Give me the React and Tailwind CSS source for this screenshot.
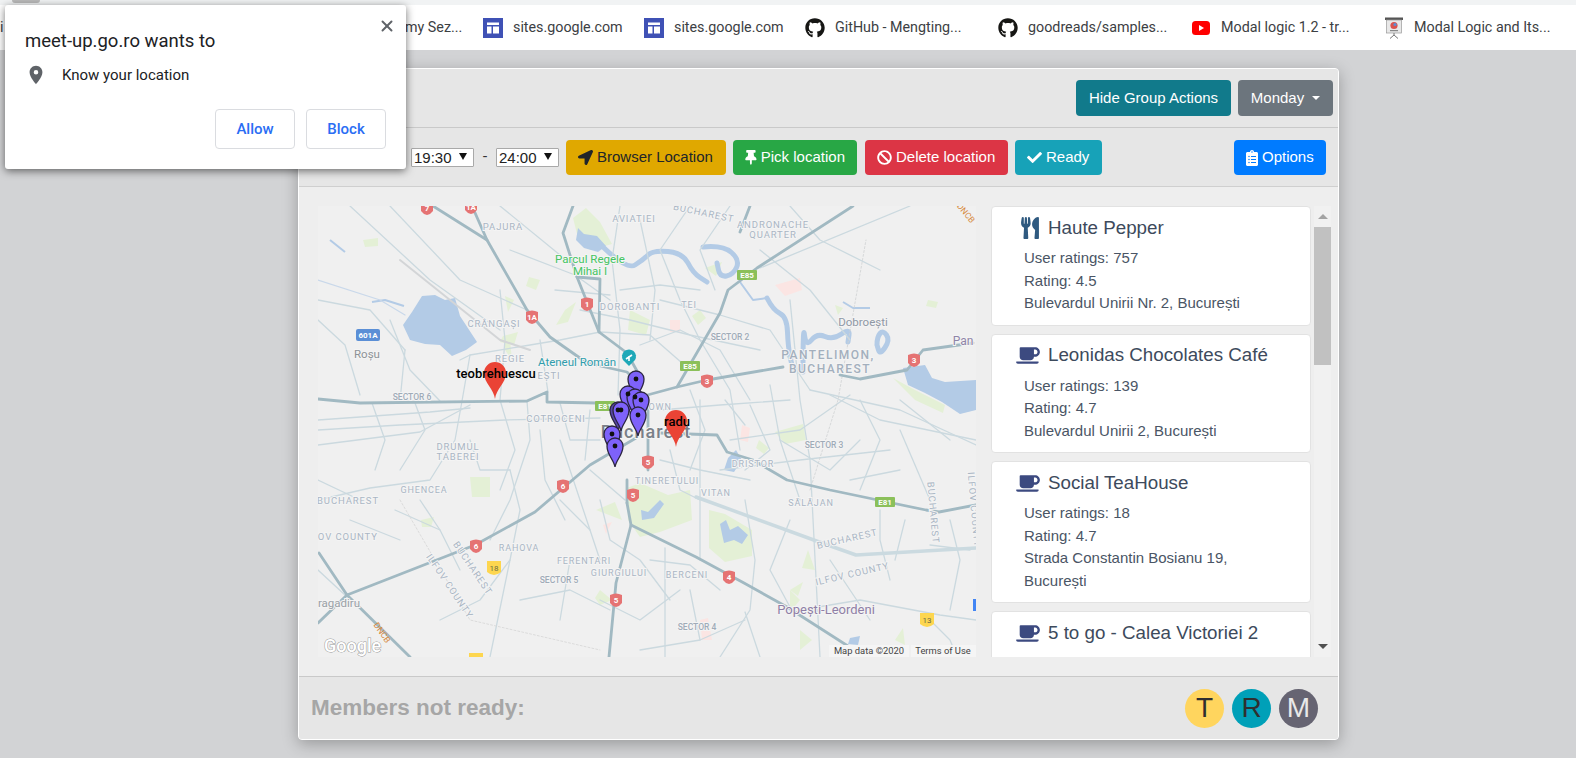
import React from "react";
import {
  FaBan,
  FaCheck,
  FaClipboardList,
  FaCoffee,
  FaGithub,
  FaLocationArrow,
  FaThumbtack,
  FaUtensils,
} from "react-icons/fa";
import { MdLocationOn } from "react-icons/md";
import { X } from "lucide-react";

const mainRoads = [
  "M433 206L487 240L527 310L550 337L587 363L627 372L640 385",
  "M472 206L487 240",
  "M318 399L360 403L527 401L547 392L547 402L597 403L640 408",
  "M573 206L563 233L577 277L599 332L627 353L642 380",
  "M577 277L600 279L599 332",
  "M853 206L757 268L728 290L720 313L677 387L640 397",
  "M750 206L740 232",
  "M677 387L707 380L783 367",
  "M840 375L860 379L907 370L923 350L973 343",
  "M660 433L717 435L727 452L753 460L787 480L830 490L926 510L939 512L976 505",
  "M636 438L590 465L535 512L475 545L347 595L319 553",
  "M347 595L410 657",
  "M347 595L318 623",
  "M648 400L648 470",
  "M627 503L631 525L616 583L609 657",
  "M631 525L696 557L744 583L787 607L865 657",
  "M627 480L627 503",
];

const ringRoad = "M696 497L822 543L856 555L976 548";

const minorRoads = [
  "M318 420L430 412L470 408",
  "M318 430L400 425L505 420L600 418",
  "M318 445L420 432L470 405",
  "M460 360L470 355L530 345L560 340L600 332",
  "M470 355L462 401L455 440L430 480L370 488L318 500",
  "M390 320L410 370L440 401",
  "M318 300L370 310L405 350",
  "M500 290L505 340L500 400L515 450L500 490",
  "M527 401L530 440L510 500L490 540",
  "M510 250L575 275L610 300",
  "M390 206L460 280L527 310",
  "M350 206L430 280L500 330",
  "M500 206L560 255",
  "M580 310L630 320L690 335L760 350",
  "M620 206L612 260L620 330L618 395",
  "M640 220L655 290L650 340",
  "M690 206L660 250L680 300L700 340L730 390L740 450",
  "M660 300L720 315L770 330L810 390",
  "M790 300L800 400L810 460L820 657",
  "M770 385L780 440L800 500",
  "M830 395L880 420L976 440",
  "M760 250L810 290L850 340",
  "M810 390L900 410L976 445",
  "M730 440L800 430L850 395",
  "M720 470L800 460L890 450",
  "M700 400L700 560",
  "M670 450L680 490L700 500",
  "M560 440L580 500L600 560",
  "M540 430L545 480L565 520",
  "M510 470L520 510L510 560L490 657",
  "M420 500L440 530L460 570",
  "M600 500L610 540L640 560L670 600",
  "M665 548L665 657",
  "M650 560L690 565L720 590",
  "M640 650L700 640L745 620",
  "M745 500L755 560L750 610L720 657",
  "M745 612L760 657",
  "M800 610L860 600L940 615L976 620",
  "M930 620L950 640L957 657",
  "M880 510L880 540L890 580",
  "M930 545L970 550",
  "M900 400L950 440",
  "M850 480L900 470",
  "M590 470L625 500",
  "M560 500L590 530",
  "M440 620L480 600L510 560",
  "M318 480L360 500",
  "M910 206L760 268",
  "M318 320L345 345L360 395",
  "M405 350L400 401",
  "M372 403L385 440L375 470",
  "M415 403L425 430L400 470",
  "M470 440L480 470L510 470",
  "M540 340L548 392",
  "M560 403L570 440L600 440",
  "M590 410L585 460",
  "M600 332L650 335L690 370",
  "M620 290L660 285L700 290",
  "M555 290L610 295",
  "M640 345L680 330L720 350L750 400",
  "M660 410L720 405L790 400",
  "M690 390L705 430L690 470",
  "M725 400L745 425",
  "M750 405L770 450L745 470",
  "M660 460L700 470L750 480",
  "M780 440L830 470L860 440",
  "M860 400L880 440L860 490",
  "M900 430L930 500",
  "M600 600L640 620L680 590",
  "M520 600L570 590L610 610",
  "M570 560L560 620",
  "M690 590L700 640",
  "M790 520L770 570L790 607",
  "M830 560L870 620",
  "M950 520L960 560L950 610",
  "M905 520L895 560",
  "M440 530L395 510",
  "M350 520L400 540",
  "M318 570L345 595",
  "M730 206L700 250L715 290",
  "M790 206L820 240L880 270",
];

const parks = [
  "M573 218L586 208L600 222L612 244L590 250L578 238Z",
  "M363 240L378 238L378 246L365 247Z",
  "M529 277L540 280L536 290L526 286Z",
  "M505 296L514 300L508 312Z",
  "M565 310L576 302L568 322L556 325Z",
  "M503 336L518 332L514 345L500 342Z",
  "M504 338L510 340L512 360L505 350Z",
  "M630 310L650 320L646 335L628 330Z",
  "M700 310L706 318L698 325L692 316Z",
  "M705 268L722 262L716 276Z",
  "M835 305L843 308L838 315Z",
  "M928 300L938 302L936 308L926 306Z",
  "M759 440L769 448L764 454L756 448Z",
  "M775 432L803 424L806 440L785 444Z",
  "M627 488L640 483L668 495L690 490L692 520L660 532L640 537L628 520Z",
  "M709 510L725 514L752 530L752 556L725 562L709 548Z",
  "M470 477L490 477L490 497L472 497Z",
  "M421 520L434 517L431 527L422 527Z",
  "M596 510L615 502L622 520Z",
  "M600 590L612 600L600 605L595 598Z",
  "M895 640L903 628L905 645Z",
  "M808 550L815 570L802 568Z",
  "M893 378L915 390L945 405L943 413L915 400Z",
  "M790 590L800 600L790 612Z",
  "M800 630L812 640L800 650Z",
  "M790 590L803 582L798 596Z",
];

const pinks = [
  "M775 285L800 278L802 290L785 296Z",
  "M670 320L680 320L680 332L670 332Z",
  "M742 425L750 428L748 442L740 440Z",
  "M603 525L612 522L606 534Z",
  "M700 620L708 618L712 640L702 640Z",
];

// river bends, drawn rounded by smoothPath
const rivers = [
  [[603, 247], [627, 270], [643, 260], [653, 250], [683, 253], [693, 273], [707, 282]],
  [[703, 247], [723, 245], [740, 260], [733, 275], [720, 277], [717, 263]],
  [[767, 298], [773, 310], [787, 317], [788, 347], [793, 370]],
  [[803, 372], [803, 323], [806, 347], [817, 333], [833, 340], [850, 328], [848, 342]],
  [[877, 345], [877, 337], [883, 330], [890, 340], [880, 355], [877, 345]],
];

function smoothPath(pts) {
  let d = `M${pts[0][0]} ${pts[0][1]}`;
  for (let i = 1; i < pts.length - 1; i++) {
    const mx = (pts[i][0] + pts[i + 1][0]) / 2;
    const my = (pts[i][1] + pts[i + 1][1]) / 2;
    d += `Q${pts[i][0]} ${pts[i][1]} ${mx} ${my}`;
  }
  const last = pts[pts.length - 1];
  return `${d}L${last[0]} ${last[1]}`;
}

const labels = [
  ["PAJURA", 503, 230, 9.5, 0],
  ["AVIATIEI", 634, 222, 9.5, 0],
  ["DOROBANȚI", 630, 310, 9.5, 0],
  ["CRÂNGAȘI", 494, 327, 9.5, 0],
  ["REGIE", 510, 362, 9.5, 0],
  ["EȘTI", 549, 379, 9.5, 0],
  ["COTROCENI", 556, 422, 9.5, 0],
  ["DRUMUL", 458, 450, 9.5, 0],
  ["TABEREI", 458, 460, 9.5, 0],
  ["BUCHAREST", 703, 216, 9.5, 12],
  ["ANDRONACHE", 773, 228, 9.5, 0],
  ["QUARTER", 773, 238, 9.5, 0],
  ["TEI", 689, 308, 9, 0],
  ["TOWN", 657, 410, 9, 0],
  ["DRISTOR", 753, 467, 9, 0],
  ["TINERETULUI", 667, 484, 9, 0],
  ["VITAN", 716, 496, 9, 0],
  ["SĂLĂJAN", 811, 506, 9, 0],
  ["GHENCEA", 424, 493, 9, 0],
  ["RAHOVA", 519, 551, 9, 0],
  ["FERENTARI", 584, 564, 9, 0],
  ["GIURGIULUI", 619, 576, 9, 0],
  ["BERCENI", 687, 578, 9, 0],
  ["BUCHAREST", 348, 504, 9.5, 0],
  ["ILFOV COUNTY", 340, 540, 9.5, 0],
  ["BUCHAREST", 470, 570, 9.5, 56],
  ["ILFOV COUNTY", 447, 588, 9.5, 56],
  ["BUCHAREST", 848, 542, 9.5, -13],
  ["ILFOV COUNTY", 853, 577, 9.5, -13],
  ["BUCHAREST", 930, 513, 9.5, 85],
  ["ILFOV COUNTY", 971, 510, 9.5, 85],
];

const sectors = [
  ["SECTOR 6", 412, 400],
  ["SECTOR 2", 730, 340],
  ["SECTOR 3", 824, 448],
  ["SECTOR 5", 559, 583],
  ["SECTOR 4", 697, 630],
];

const redShields = [
  ["7", 427, 208],
  ["1A", 471, 207],
  ["1A", 532, 317],
  ["1", 587, 304],
  ["3", 707, 381],
  ["3", 914, 360],
  ["6", 563, 486],
  ["6", 476, 546],
  ["5", 648, 462],
  ["5", 633, 495],
  ["5", 616, 600],
  ["4", 729, 577],
];

const greenSigns = [
  ["E85", 747, 275],
  ["E85", 690, 366],
  ["E81", 605, 406],
  ["E81", 885, 502],
];

const purplePins = [
  [618, 410, true],
  [636, 379],
  [628, 394],
  [635, 397],
  [641, 400],
  [621, 410],
  [638, 415],
  [612, 434],
  [615, 446],
];

function Label({ text, x, y, size, rotate = 0 }) {
  return (
    <text
      x={x}
      y={y}
      fontSize={size}
      textAnchor="middle"
      letterSpacing="0.9"
      transform={rotate ? `rotate(${rotate} ${x} ${y})` : undefined}
      className="font-['Roboto'] fill-[#aab6c4] stroke-[#f4f4f4] stroke-2 [paint-order:stroke]"
    >
      {text}
    </text>
  );
}

function MapView() {
  return (
    <svg viewBox="318 206 658 451" className="w-[658px] h-[451px] block shrink-0 bg-[#f0f0f0]">
      <g fill="#e4f0d6">
        {parks.map((d, i) => (
          <path key={i} d={d} />
        ))}
      </g>
      <g fill="#fbe5e3">
        {pinks.map((d, i) => (
          <path key={i} d={d} />
        ))}
      </g>

      {/* water */}
      <g fill="#b3cbe6">
        <path d="M403 325L412 312L422 296L435 295L445 300L455 298L460 316L477 342L466 350L452 356L440 345L425 344L410 340Z" />
        <path d="M578 228L584 234L597 236L606 246L598 252L584 248L576 240Z" />
        <path d="M903 368L925 365L932 378L945 382L976 380L976 410L960 414L942 402L925 393L908 385Z" />
        <path d="M728 458L736 450L742 460L734 472L724 470Z" />
        <path d="M641 510L648 512L660 500L664 504L654 518L642 520Z" />
        <path d="M720 524L726 520L730 530L738 526L748 535L742 544L734 540L724 543L722 534Z" />
        <path d="M850 638L860 636L858 645L848 644Z" />
      </g>
      <g fill="none" stroke="#b3cbe6" strokeWidth="5" strokeLinejoin="round" strokeLinecap="round">
        {rivers.map((pts, i) => (
          <path key={i} d={smoothPath(pts)} />
        ))}
      </g>
      <g fill="none" stroke="#b3cbe6" strokeWidth="2" strokeLinejoin="round">
        <path d="M843 302L853 308L870 308" />
        <path d="M330 240L345 252" />
        <path d="M404 306L385 300L372 302" />
        <path d="M740 282L753 300L767 298" />
      </g>

      {/* roads */}
      <g fill="none" strokeLinejoin="round" strokeLinecap="round">
        <g stroke="#cbd9df" strokeWidth="1.3">
          {minorRoads.map((d, i) => (
            <path key={i} d={d} />
          ))}
        </g>
        <path d={ringRoad} stroke="#cbdae0" strokeWidth="3.5" />
        <path d="M400 260L500 340L530 350" stroke="#d3d5d7" strokeWidth="2" />
        <path d="M318 280L380 300L405 315" stroke="#c9d8ea" strokeWidth="1.2" />
        <path d="M810 490L838 400L866 240" stroke="#cfd2d3" strokeWidth="0.8" strokeDasharray="2 2" />
        <path d="M400 500L470 620L600 650" stroke="#d6d6d6" strokeWidth="0.8" strokeDasharray="2 2" />
        <g stroke="#a1b9c2" strokeWidth="2.8">
          {mainRoads.map((d, i) => (
            <path key={i} d={d} />
          ))}
        </g>
      </g>

      {/* map labels */}
      {labels.map(([text, x, y, size, rotate], i) => (
        <Label key={i} text={text} x={x} y={y} size={size} rotate={rotate} />
      ))}
      {sectors.map(([text, x, y]) => (
        <text
          key={text}
          x={x}
          y={y}
          fontSize="8.5"
          fontWeight="500"
          textAnchor="middle"
          className="font-['Roboto'] fill-[#9fabb8] stroke-[#f4f4f4] stroke-2 [paint-order:stroke]"
        >
          {text}
        </text>
      ))}
      <g className="font-['Roboto'] stroke-[#f4f4f4] stroke-2 [paint-order:stroke]">
        <text x="590" y="263" fontSize="11.5" textAnchor="middle" className="fill-[#45c463]">Parcul Regele</text>
        <text x="590" y="275" fontSize="11.5" textAnchor="middle" className="fill-[#45c463]">Mihai I</text>
        <text x="367" y="358" fontSize="11.5" textAnchor="middle" className="fill-[#8d9296]">Roșu</text>
        <text x="577" y="366" fontSize="11.5" textAnchor="middle" className="fill-[#2f9dad]">Ateneul Român</text>
        <text x="863" y="326" fontSize="11.5" textAnchor="middle" className="fill-[#8f98a5]">Dobroești</text>
        <text x="963" y="345" fontSize="12" textAnchor="middle" className="fill-[#8f84a8]">Pan</text>
        <text x="828" y="359" fontSize="12" fontWeight="500" letterSpacing="1.5" textAnchor="middle" className="fill-[#a3afbd]">PANTELIMON,</text>
        <text x="830" y="373" fontSize="12" fontWeight="500" letterSpacing="1.5" textAnchor="middle" className="fill-[#a3afbd]">BUCHAREST</text>
        <text x="339" y="607" fontSize="11.5" textAnchor="middle" className="fill-[#9aa0a6]">ragadiru</text>
        <text x="826" y="614" fontSize="13" textAnchor="middle" className="fill-[#8f7fa6]">Popești-Leordeni</text>
        <text x="646" y="438" fontSize="18" fontWeight="500" letterSpacing="1" textAnchor="middle" className="fill-[#7a8088]">Bucharest</text>
      </g>
      <text x="383" y="636" fontSize="8.5" textAnchor="middle" transform="rotate(55 383 632)" className="font-['Roboto'] fill-[#d78a3d]">DNCB</text>
      <text x="966" y="216" fontSize="8.5" textAnchor="middle" transform="rotate(50 966 213)" className="font-['Roboto'] fill-[#d78a3d]">DNCB</text>

      {/* road signs */}
      {redShields.map(([t, x, y], i) => (
        <g key={i}>
          <path
            d={`M${x - 6} ${y - 5}Q${x} ${y - 8} ${x + 6} ${y - 5}L${x + 6} ${y + 3}Q${x + 4} ${y + 6} ${x} ${y + 7}Q${x - 4} ${y + 6} ${x - 6} ${y + 3}Z`}
            fill="#e57373"
          />
          <text x={x} y={y + 3} fontSize="8" fontWeight="700" textAnchor="middle" fill="#fff" className="font-['Roboto']">{t}</text>
        </g>
      ))}
      {greenSigns.map(([t, x, y], i) => (
        <g key={i}>
          <rect x={x - 10} y={y - 5} width="20" height="10" rx="1" fill="#8bc05a" />
          <text x={x} y={y + 3} fontSize="8" fontWeight="700" textAnchor="middle" fill="#fff" className="font-['Roboto']">{t}</text>
        </g>
      ))}
      <rect x="356" y="329" width="24" height="12" rx="2" fill="#5b8fd6" />
      <text x="368" y="338" fontSize="8" fontWeight="700" textAnchor="middle" fill="#fff" className="font-['Roboto']">601A</text>
      {[["18", 494, 568], ["13", 927, 620], ["", 476, 660]].map(([t, x, y]) => (
        <g key={x}>
          <path d={`M${x - 7} ${y - 7}H${x + 7}V${y + 4}Q${x} ${y + 10} ${x - 7} ${y + 4}Z`} fill="#fdd64f" />
          <text x={x} y={y + 3} fontSize="8" textAnchor="middle" fill="#6b6b45" className="font-['Roboto']">{t}</text>
        </g>
      ))}
      <rect x="973" y="599" width="4" height="12" fill="#4285f4" />

      {/* attraction pin */}
      <path d="M629 366L623 360A7 7 0 1 1 635 360Z" fill="#1fa8b8" />
      <path d="M626 359L632 355M629 361V356" stroke="#fff" strokeWidth="1.6" />

      {/* markers */}
      {purplePins.map(([x, y, back], i) => (
        <path
          key={i}
          d={`M${x} ${y + 21}C${x - 1} ${y + 14} ${x - 8} ${y + 9} ${x - 8} ${y}A8 8 0 1 1 ${x + 8} ${y}C${x + 8} ${y + 9} ${x + 1} ${y + 14} ${x} ${y + 21}Z`}
          fill={back ? "#5a47a8" : "#7e62fa"}
          stroke="#2b2540"
          strokeWidth="1.3"
        />
      ))}
      {purplePins.map(([x, y], i) => (
        <circle key={i} cx={x} cy={y} r="2.4" fill="#111" />
      ))}
      {[[495, 373], [676, 421]].map(([x, y]) => (
        <path
          key={x}
          d={`M${x} ${y + 26}C${x - 1} ${y + 16} ${x - 11} ${y + 10} ${x - 11} ${y}A11 11 0 1 1 ${x + 11} ${y}C${x + 11} ${y + 10} ${x + 1} ${y + 16} ${x} ${y + 26}Z`}
          fill="#ea4335"
        />
      ))}
      <text x="496" y="378" fontSize="13" fontWeight="500" textAnchor="middle" fill="#000" className="font-['Roboto']">teobrehuescu</text>
      <text x="677" y="426" fontSize="13" fontWeight="500" textAnchor="middle" fill="#000" className="font-['Roboto']">radu</text>

      {/* google attribution */}
      <text x="324" y="652" fontSize="18" fontWeight="500" fill="#fff" className="font-['Roboto'] stroke-[#9a9a9a] stroke-1 [paint-order:stroke]">Google</text>
      <rect x="829" y="645" width="80" height="12" fill="#f5f5f5" />
      <rect x="911" y="645" width="65" height="12" fill="#f5f5f5" />
      <text x="869" y="654" fontSize="9.4" textAnchor="middle" fill="#444" className="font-['Roboto']">Map data ©2020</text>
      <text x="943" y="654" fontSize="9.4" textAnchor="middle" fill="#444" className="font-['Roboto']">Terms of Use</text>
    </svg>
  );
}

function SitesIcon() {
  return (
    <svg viewBox="0 0 20 20" className="w-5 h-5 shrink-0">
      <rect width="20" height="20" fill="#3f51b5" />
      <rect x="4" y="4.5" width="12" height="2.5" fill="#fff" />
      <rect x="4" y="8.5" width="4.5" height="7" fill="#fff" />
      <rect x="10" y="8.5" width="6" height="7" fill="#fff" />
    </svg>
  );
}

function YoutubeIcon() {
  return (
    <svg viewBox="0 0 20 20" className="w-5 h-5 shrink-0">
      <rect x="1" y="3" width="18" height="14" rx="3.5" fill="#ff0000" />
      <path d="M8 7L13 10L8 13Z" fill="#fff" />
    </svg>
  );
}

function SlideIcon() {
  return (
    <svg viewBox="0 0 20 22" className="w-5 h-[22px] shrink-0">
      <rect x="1" y="0.5" width="18" height="2.5" fill="#555" />
      <rect x="2.5" y="3" width="15" height="13" fill="#e8e8e8" stroke="#999" strokeWidth="0.7" />
      <circle cx="10" cy="8.5" r="3.6" fill="#d9534f" />
      <circle cx="11" cy="7.5" r="1.6" fill="#5b8fd6" />
      <rect x="6" y="13" width="8" height="1.2" fill="#888" />
      <path d="M10 16V18M10 18L6 21.5M10 18L14 21.5" stroke="#777" strokeWidth="1" fill="none" />
    </svg>
  );
}

const bookmarks = [
  { icon: <SitesIcon />, text: "sites.google.com", w: "w-[161px]" },
  { icon: <SitesIcon />, text: "sites.google.com", w: "w-[161px]" },
  { icon: <FaGithub className="w-5 h-5 shrink-0 text-[#161614]" />, text: "GitHub - Mengting...", w: "w-[193px]" },
  { icon: <FaGithub className="w-5 h-5 shrink-0 text-[#161614]" />, text: "goodreads/samples...", w: "w-[193px]" },
  { icon: <YoutubeIcon />, text: "Modal logic 1.2 - tr...", w: "w-[193px]" },
  { icon: <SlideIcon />, text: "Modal Logic and Its...", w: "w-[180px]" },
];

function BookmarkBar() {
  return (
    <div className="h-[45px] bg-white flex items-center shrink-0 font-['Roboto',sans-serif] text-[14.3px] text-[#3c4043]">
      <div className="w-[405px]">i</div>
      <div className="w-[78px] whitespace-nowrap">my Sez...</div>
      {bookmarks.map((b, i) => (
        <div key={i} className={`${b.w} flex items-center gap-[10px] whitespace-nowrap`}>
          {b.icon}
          <span>{b.text}</span>
        </div>
      ))}
    </div>
  );
}

function ToolButton({ className, icon, children }) {
  return (
    <button className={`h-[35px] mt-[1px] px-[12px] rounded-[4px] flex items-center gap-[4px] text-[15px] whitespace-nowrap ${className}`}>
      {icon}
      {children}
    </button>
  );
}

const places = [
  { icon: "food", name: "Haute Pepper", ratings: 757, rating: 4.5, address: ["Bulevardul Unirii Nr. 2, București"] },
  { icon: "cafe", name: "Leonidas Chocolates Café", ratings: 139, rating: 4.7, address: ["Bulevardul Unirii 2, București"] },
  { icon: "cafe", name: "Social TeaHouse", ratings: 18, rating: 4.7, address: ["Strada Constantin Bosianu 19,", "București"] },
  { icon: "cafe", name: "5 to go - Calea Victoriei 2", ratings: 37, rating: 4.4, address: ["Calea Victoriei 2, București"] },
];

function PlaceCard({ place }) {
  return (
    <div className="bg-white rounded-[4px] border border-[#e2e2e2] pt-[9px] pb-[10px] shrink-0 text-[#4a5565]">
      <div className="h-[24px] flex items-center text-[18.75px] text-[#3d4a5c]">
        <div className="w-[56px] flex justify-end pr-[8px]">
          {place.icon === "food" ? (
            <FaUtensils className="w-[20px] h-[22px] text-[#2f5a80]" />
          ) : (
            <FaCoffee className="w-[24px] h-[19px] text-[#3c4a80]" />
          )}
        </div>
        {place.name}
      </div>
      <div className="mt-[7px] pl-[32px] text-[15px] leading-[22.5px]">
        <div>User ratings: {place.ratings}</div>
        <div>Rating: {place.rating}</div>
        {place.address.map((line) => (
          <div key={line}>{line}</div>
        ))}
      </div>
    </div>
  );
}

function PlaceList() {
  return (
    <div className="flex h-[451px] ml-[15px] overflow-hidden">
      <div className="w-[320px] flex flex-col gap-[8px] overflow-hidden">
        {places.map((p) => (
          <PlaceCard key={p.name} place={p} />
        ))}
      </div>
      <div className="w-[17px] ml-[3px] flex flex-col items-center bg-[#f1f1f1]">
        <div className="h-[21px] w-full flex items-center justify-center">
          <div className="w-0 h-0 border-x-[5px] border-x-transparent border-b-[5px] border-b-[#a3a3a3]" />
        </div>
        <div className="w-full h-[138px] bg-[#c1c1c1]" />
        <div className="flex-1" />
        <div className="h-[21px] w-full flex items-center justify-center">
          <div className="w-0 h-0 border-x-[5px] border-x-transparent border-t-[5px] border-t-[#505050]" />
        </div>
      </div>
    </div>
  );
}

function TimeSelect({ value }) {
  return (
    <div className="relative -mt-[3px] w-[63px] h-[19px]">
      <select
        defaultValue={value}
        className="appearance-none w-full h-full pl-[2px] bg-white border border-[#a9a9a9] rounded-[1px] text-[15px] leading-[17px] text-[#222]"
      >
        <option>{value}</option>
      </select>
      <span className="absolute right-[7px] top-[7px] w-0 h-0 border-x-[4px] border-x-transparent border-t-[7px] border-t-[#111]" />
    </div>
  );
}

function PermissionPopup() {
  return (
    <div className="absolute left-[5px] top-[5px] w-[401px] h-[164px] bg-white rounded-[3px] shadow-[0_2px_8px_rgba(0,0,0,0.55)] font-['Roboto',sans-serif] text-[#202124]">
      <X size={18} strokeWidth={2.6} className="absolute right-[10px] top-[12px] text-[#5f6368]" />
      <div className="pl-[20px] pt-[23px] text-[18.5px] leading-[26px]">meet-up.go.ro wants to</div>
      <div className="flex items-center pl-[20px] mt-[11px] h-[20px] text-[15px]">
        <MdLocationOn className="w-[22px] h-[22px] text-[#5f6368]" />
        <span className="ml-[15px]">Know your location</span>
      </div>
      <div className="flex justify-end gap-[11px] pr-[20px] mt-[24px]">
        <button className="w-[80px] h-[40px] rounded-[4px] border border-[#dadce0] text-[15px] font-medium text-[#2a6df4]">Allow</button>
        <button className="w-[80px] h-[40px] rounded-[4px] border border-[#dadce0] text-[15px] font-medium text-[#2a6df4]">Block</button>
      </div>
    </div>
  );
}

export default function App() {
  return (
    <div className="relative h-[758px] overflow-hidden bg-[#d2d3d5] font-['Liberation_Sans',sans-serif]">
      <div className="h-[5px] bg-[#f1f3f4] flex">
        <div className="ml-[12px] w-[28px] h-[3px] rounded-b-full bg-[#b9b9b9]" />
      </div>
      <BookmarkBar />

      <div className="ml-[298px] mt-[18px] w-[1041px] h-[672px] flex flex-col rounded-[4px] border border-white bg-[#eeeeee] shadow-[0_4px_16px_rgba(0,0,0,0.28)] overflow-hidden">
        {/* header */}
        <div className="h-[59px] shrink-0 bg-[#e6e6e6] border-b border-[#c9c9c9] flex items-center justify-end gap-[7px] pr-[5px]">
          <button className="h-[36px] w-[155px] rounded-[4px] bg-[#117a8b] text-white text-[15px] whitespace-nowrap">Hide Group Actions</button>
          <button className="h-[36px] w-[95px] rounded-[4px] bg-[#6c757d] text-white text-[15px] flex items-center justify-center gap-[8px]">
            Monday
            <span className="w-0 h-0 border-x-[4px] border-x-transparent border-t-[4px] border-t-white" />
          </button>
        </div>

        {/* toolbar */}
        <div className="h-[59px] shrink-0 bg-[#e6e6e6] border-b border-[#cfcfcf] flex items-center pl-[112px] pr-[12px]">
          <TimeSelect value="19:30" />
          <span className="mx-[8.5px] -mt-[1px] text-[15px] text-[#333]">-</span>
          <TimeSelect value="24:00" />
          <ToolButton className="ml-[7px] w-[160px] bg-[#e0a800] text-[#212529]" icon={<FaLocationArrow className="w-[15px] h-[15px]" />}>
            Browser Location
          </ToolButton>
          <ToolButton className="ml-[7px] w-[124px] bg-[#28a745] text-white" icon={<FaThumbtack className="w-[12px] h-[15px]" />}>
            Pick location
          </ToolButton>
          <ToolButton className="ml-[8px] w-[143px] bg-[#dc3545] text-white" icon={<FaBan className="w-[15px] h-[15px]" />}>
            Delete location
          </ToolButton>
          <ToolButton className="ml-[7px] w-[87px] bg-[#17a2b8] text-white" icon={<FaCheck className="w-[15px] h-[15px]" />}>
            Ready
          </ToolButton>
          <ToolButton className="ml-auto w-[92px] bg-[#007bff] text-white" icon={<FaClipboardList className="w-[12px] h-[16px]" />}>
            Options
          </ToolButton>
        </div>

        {/* map and results */}
        <div className="flex-1 flex pl-[19px] pt-[19px]">
          <MapView />
          <PlaceList />
        </div>

        {/* footer */}
        <div className="h-[63px] shrink-0 bg-[#e6e6e6] border-t border-[#c9c9c9] flex items-center justify-between pl-[12px] pr-[20px]">
          <div className="text-[22.5px] font-bold text-[#a6a6a6]">Members not ready:</div>
          <div className="flex gap-[8px]">
            <div className="w-[39px] h-[39px] rounded-full bg-[#ffd55e] text-[#2f2f2f] text-[28px] flex items-center justify-center">T</div>
            <div className="w-[39px] h-[39px] rounded-full bg-[#00a0b8] text-[#2f2f2f] text-[28px] flex items-center justify-center">R</div>
            <div className="w-[39px] h-[39px] rounded-full bg-[#666472] text-[#e8e8e8] text-[28px] flex items-center justify-center">M</div>
          </div>
        </div>
      </div>

      <PermissionPopup />
    </div>
  );
}
